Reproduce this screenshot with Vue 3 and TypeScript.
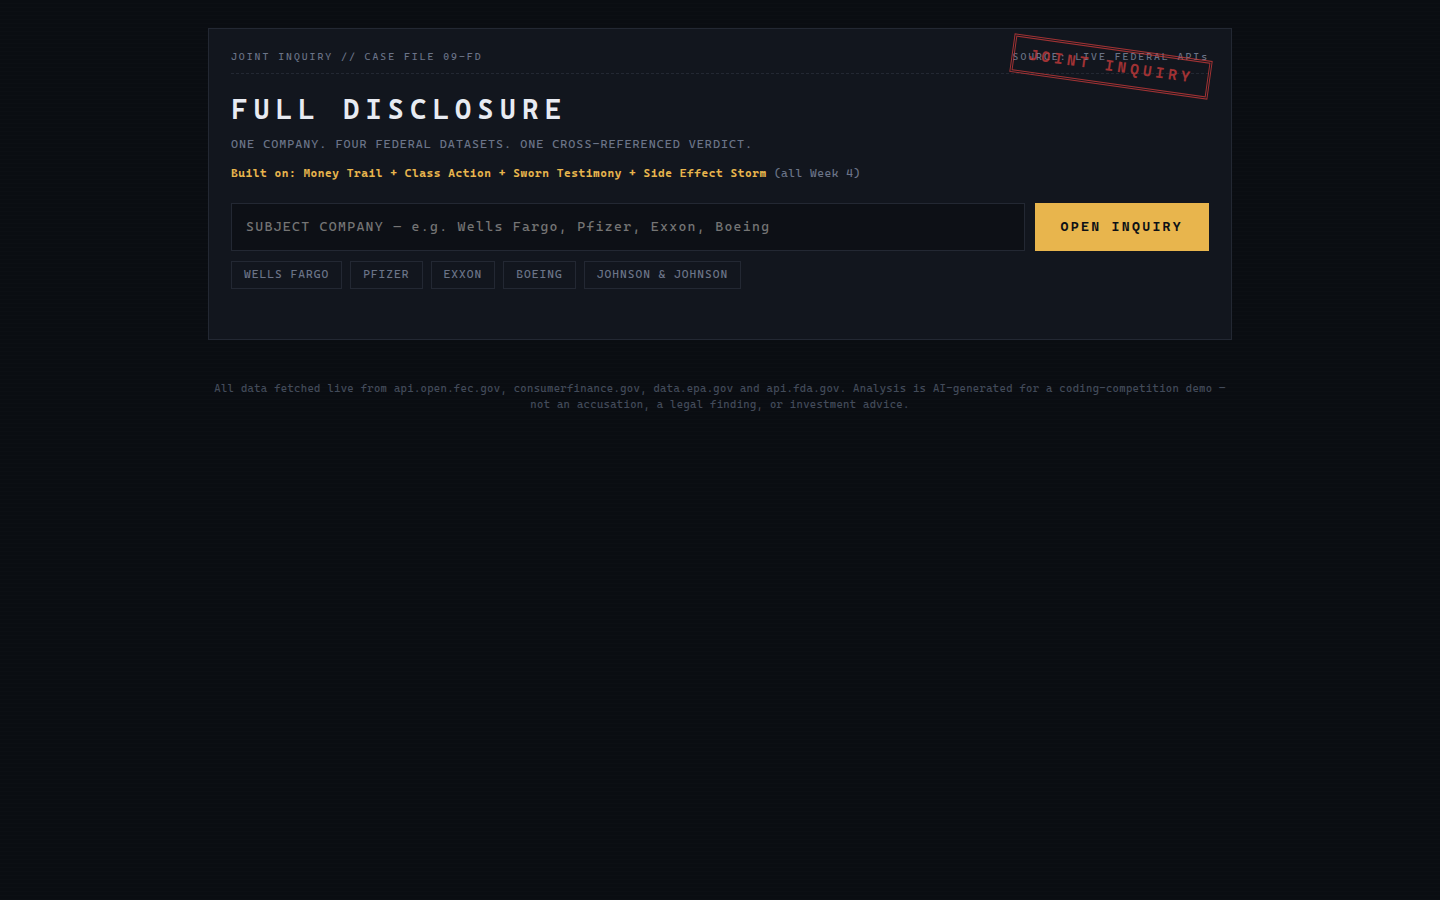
<script setup lang="ts">
import { ref } from 'vue'

const company = ref('')
const examples: string[] = ['WELLS FARGO', 'PFIZER', 'EXXON', 'BOEING', 'JOHNSON & JOHNSON']
</script>

<template>
  <div class="page">
    <main class="card">
      <div class="stamp">JOINT INQUIRY</div>
      <header class="meta">
        <span>JOINT INQUIRY // CASE FILE 09-FD</span>
        <span>SOURCE: LIVE FEDERAL APIs</span>
      </header>
      <h1>FULL DISCLOSURE</h1>
      <p class="sub">ONE COMPANY. FOUR FEDERAL DATASETS. ONE CROSS-REFERENCED VERDICT.</p>
      <p class="built">
        <b>Built on: Money Trail + Class Action + Sworn Testimony + Side Effect Storm</b> (all Week 4)
      </p>
      <form class="search" @submit.prevent>
        <input v-model="company" placeholder="SUBJECT COMPANY — e.g. Wells Fargo, Pfizer, Exxon, Boeing" />
        <button type="submit">OPEN INQUIRY</button>
      </form>
      <div class="chips">
        <button v-for="name in examples" :key="name" type="button" @click="company = name">{{ name }}</button>
      </div>
    </main>
    <footer>
      All data fetched live from api.open.fec.gov, consumerfinance.gov, data.epa.gov and api.fda.gov. Analysis is
      AI-generated for a coding-competition demo — not an accusation, a legal finding, or investment advice.
    </footer>
  </div>
</template>

<style>
body {
  margin: 0;
  background: #0a0d12;
}
</style>

<style scoped>
* {
  box-sizing: border-box;
}
.page {
  min-height: 100vh;
  padding: 28px 20px 0;
  background: repeating-linear-gradient(0deg, rgba(255, 255, 255, 0.006) 0 1px, transparent 1px 4px), #0a0d12;
  color: #e8ebf2;
  font-family: "Cascadia Code", "Cascadia Mono", "Liberation Mono", monospace;
}
.card {
  position: relative;
  width: 1024px;
  height: 312px;
  margin: 0 auto;
  padding: 22px;
  border: 1px solid #232833;
  background: #12161e;
}
.stamp {
  position: absolute;
  top: 18px;
  right: 20px;
  padding: 8px 14px;
  border: 3px double #c43a3a;
  color: #c43a3a;
  font-size: 15px;
  line-height: 17px;
  font-weight: 700;
  letter-spacing: 4px;
  transform: rotate(8deg);
  opacity: 0.8;
}
.meta {
  display: flex;
  justify-content: space-between;
  height: 23px;
  border-bottom: 1px dashed #232833;
  color: #6b7488;
  font-size: 10px;
  line-height: 12px;
  letter-spacing: 2px;
}
h1 {
  margin: 18px 0 0;
  font-size: 27.5px;
  line-height: 34px;
  letter-spacing: 6.29px;
}
.sub {
  margin: 10px 0 0;
  color: #6b7488;
  font-size: 12px;
  line-height: 17px;
  letter-spacing: 1px;
}
.built {
  margin: 12px 0 0;
  color: #6b7488;
  font-size: 11.5px;
  line-height: 17px;
  letter-spacing: 0.5px;
}
.built b {
  color: #e8b54d;
}
.search {
  display: flex;
  gap: 10px;
  height: 48px;
  margin-top: 21px;
}
input,
button {
  border-radius: 0;
  font-family: inherit;
}
input {
  flex: 1;
  padding: 0 14px 2px;
  border: 1px solid #232833;
  background: #0d1016;
  color: #e8ebf2;
  font-size: 13.5px;
  letter-spacing: 1.29px;
  outline: 0;
}
input::placeholder {
  color: #757575;
}
.search button {
  width: 174.4px;
  padding: 0 0 2px;
  border: 0;
  background: #e8b54d;
  color: #0d1016;
  font-size: 13.5px;
  font-weight: 700;
  letter-spacing: 2.29px;
}
.chips {
  display: flex;
  gap: 8px;
  margin-top: 10px;
}
.chips button {
  height: 28px;
  padding: 0 12px 2px;
  border: 1px solid #232833;
  background: transparent;
  color: #6b7488;
  font-size: 11.5px;
  letter-spacing: 1px;
}
footer {
  width: 1024px;
  margin: 41px auto 0;
  color: #434b5a;
  font-size: 10.8px;
  line-height: 16px;
  letter-spacing: 0.328px;
  text-align: center;
}
</style>
